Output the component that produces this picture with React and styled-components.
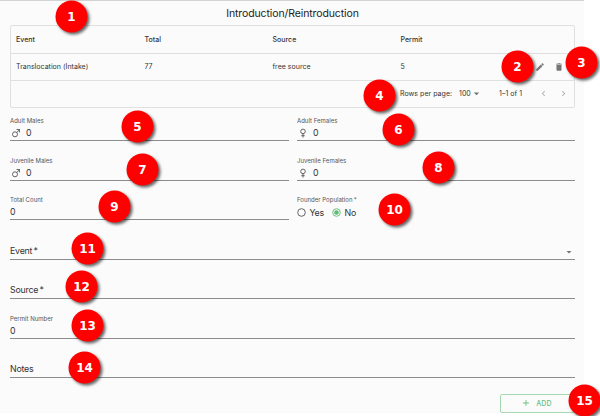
import React from "react";
import styled, { createGlobalStyle } from "styled-components";

const Global = createGlobalStyle`
  * { box-sizing: border-box; }
  body { margin: 0; background: #fff; overflow: hidden; }
`;

const Screen = styled.div`
  position: relative;
  width: 600px;
  height: 416px;
  overflow: hidden;
  background: #fff;
  font-family: Inter, "Liberation Sans", sans-serif;
  color: #333;
`;
const Panel = styled.main`
  width: 584px;
  height: 413px;
  padding: 0 9px 0 10px;
  border-top: 1px solid #d3d3d3;
  background: #fbfbfb;
`;
const Title = styled.h1`
  margin: 0;
  height: 24px;
  line-height: 26px;
  text-align: center;
  font-size: 10.5px;
  font-weight: 400;
  letter-spacing: -0.11px;
  color: #222;
`;
const Table = styled.section`
  height: 83px;
  border: 1px solid #e0e0e0;
  border-radius: 2px;
  font-size: 7px;
`;
const Row = styled.div`
  display: grid;
  grid-template-columns: 128.5px 128px 128px 1fr auto;
  align-items: center;
  height: ${(p) => (p.$head ? 28 : 27)}px;
  padding: 0 10px ${(p) => (p.$head ? 0 : 1)}px 5px;
  border-bottom: 1px solid #e0e0e0;
  font-weight: ${(p) => (p.$head ? 500 : 400)};
  letter-spacing: 0.02px;
  white-space: nowrap;
`;
const Actions = styled.div`
  display: flex;
  gap: 9px;
  padding-top: 1px;
  color: #757575;
`;
const Pager = styled.div`
  display: flex;
  align-items: center;
  justify-content: flex-end;
  height: 25px;
  padding-right: 5px;
  white-space: nowrap;
  letter-spacing: 0.04px;
`;
const PagerItem = styled.span`
  display: flex;
  align-items: center;
  width: ${(p) => p.$w}px;
  color: ${(p) => (p.$muted ? "#b0b0b0" : "#333")};
`;
const PagerArrow = styled.span`
  display: flex;
  margin-left: -0.5px;
  color: #757575;
`;
const Form = styled.form`
  display: grid;
  grid-template-columns: 279px 278px;
  column-gap: 8px;
  grid-template-rows: 33px 40px 39px 40px 39px 40px 39px;
`;
const Field = styled.label`
  display: flex;
  flex-direction: column;
  justify-content: flex-end;
  grid-column: ${(p) => (p.$wide ? "1 / -1" : "auto")};
  border-bottom: ${(p) => (p.$plain ? "0" : "1px solid #8c8c8c")};
`;
const Caption = styled.span`
  height: 8px;
  line-height: 8px;
  font-size: 6px;
  letter-spacing: 0.02px;
  color: #555;
  white-space: nowrap;
`;
const Value = styled.span`
  display: flex;
  align-items: center;
  height: 15px;
  line-height: 15px;
  padding-left: ${(p) => (p.$icon ? 2 : 0)}px;
  gap: 6px;
  font-size: 8.8px;
  letter-spacing: -0.2px;
  color: #333;
`;
const Prompt = styled(Value)`
  justify-content: space-between;
  height: 17px;
`;
const Star = styled.span`
  margin-left: 1.3px;
`;
const ArrowSlot = styled.span`
  display: flex;
  padding-top: 2px;
  color: #757575;
`;
const Radios = styled.span`
  display: flex;
  align-items: center;
  gap: 4px;
  height: 15px;
  margin-top: 1px;
  margin-left: -0.5px;
  font-size: 8.8px;
  letter-spacing: -0.2px;
`;
const RadioText = styled.span`
  width: ${(p) => p.$w}px;
`;
const Footer = styled.footer`
  display: flex;
  justify-content: flex-end;
  padding-top: 16px;
`;
const AddButton = styled.button`
  display: flex;
  align-items: center;
  justify-content: center;
  gap: 5px;
  width: 75px;
  height: 19px;
  padding: 0 2px 1px 0;
  border: 1px solid #a5d8b1;
  border-radius: 2px;
  background: transparent;
  font: 500 7px Inter, sans-serif;
  letter-spacing: 0.15px;
  color: #6bbf7f;
`;
const Badge = styled.span`
  position: absolute;
  left: ${(p) => p.$x - 16}px;
  top: ${(p) => p.$y - 16}px;
  transform: translate(0.5px, 0.5px);
  display: flex;
  align-items: center;
  justify-content: center;
  width: 32px;
  height: 32px;
  border-radius: 50%;
  background: #f00;
  box-shadow: 2px 2px 3px rgba(0, 0, 0, 0.6);
  font: bold 12px "DejaVu Sans", sans-serif;
  color: #fff;
`;

const Icon = ({ d, size = 10 }) => (
  <svg width={size} height={size} viewBox="0 0 24 24" fill="currentColor"><path d={d} /></svg>
);
const PENCIL = "M3 17.25V21h3.75L17.81 9.94l-3.75-3.75L3 17.25zM20.71 7.04a1 1 0 0 0 0-1.41l-2.34-2.34a1 1 0 0 0-1.41 0l-1.83 1.83 3.75 3.75 1.83-1.83z";
const TRASH = "M6 19c0 1.1.9 2 2 2h8c1.1 0 2-.9 2-2V7H6v12zM19 4h-3.5l-1-1h-5l-1 1H5v2h14V4z";
const LEFT = "M15.41 7.41 14 6l-6 6 6 6 1.41-1.41L10.83 12z";
const RIGHT = "M10 6 8.59 7.41 13.17 12l-4.58 4.59L10 18l6-6z";
const DOWN = "M7 10l5 5 5-5z";
const PLUS = "M19 13h-6v6h-2v-6H5v-2h6V5h2v6h6z";

const Sex = ({ male }) => (
  <svg width="8" height="10" viewBox="0 0 8 10" fill="none" stroke="#555" strokeWidth="0.9">
    {male ? (
      <><circle cx="3" cy="6.3" r="2.5" /><path d="M4.8 4.5 7.5 1.6M4.6 1.5h3v2.9" /></>
    ) : (
      <><circle cx="4" cy="3.4" r="2.3" /><path d="M4 5.7v3.8M2.3 7.7h3.4" /></>
    )}
  </svg>
);
const Radio = ({ on }) => (
  <svg width="9" height="9" viewBox="0 0 9 9" fill="none" stroke={on ? "#5dbb73" : "#555"}>
    <circle cx="4.5" cy="4.5" r="3.8" strokeWidth="0.9" />
    {on && <circle cx="4.5" cy="4.5" r="2.3" fill="#5dbb73" stroke="none" />}
  </svg>
);
const NumberField = ({ label, sex, wide }) => (
  <Field $wide={wide}>
    <Caption>{label}</Caption>
    <Value $icon={!!sex}>{sex && <Sex male={sex === "m"} />}0</Value>
  </Field>
);

const BADGES = [
  [71, 16], [517, 66], [581, 62], [379, 95], [137, 126],
  [398, 129], [142, 169], [438, 167], [114, 206], [394, 209],
  [87, 248], [81, 286], [87, 325], [84, 367], [584, 400],
];

export default function App() {
  return (
    <Screen>
      <Global />
      <Panel>
        <Title>Introduction/Reintroduction</Title>
        <Table>
          <Row $head>
            <span>Event</span><span>Total</span><span>Source</span><span>Permit</span>
          </Row>
          <Row>
            <span>Translocation (Intake)</span><span>77</span><span>free source</span><span>5</span>
            <Actions><Icon d={PENCIL} /><Icon d={TRASH} /></Actions>
          </Row>
          <Pager>
            <PagerItem $w={59}>Rows per page:</PagerItem>
            <PagerItem $w={40}>100<PagerArrow><Icon d={DOWN} size={13} /></PagerArrow></PagerItem>
            <PagerItem $w={39}>1–1 of 1</PagerItem>
            <PagerItem $w={20} $muted><Icon d={LEFT} size={11} /></PagerItem>
            <PagerItem $w={11} $muted><Icon d={RIGHT} size={11} /></PagerItem>
          </Pager>
        </Table>
        <Form>
          <NumberField label="Adult Males" sex="m" />
          <NumberField label="Adult Females" sex="f" />
          <NumberField label="Juvenile Males" sex="m" />
          <NumberField label="Juvenile Females" sex="f" />
          <NumberField label="Total Count" />
          <Field as="div" $plain>
            <Caption>Founder Population<Star>*</Star></Caption>
            <Radios>
              <Radio /><RadioText $w={18}>Yes</RadioText>
              <Radio on /><RadioText $w={14}>No</RadioText>
            </Radios>
          </Field>
          <Field $wide>
            <Prompt>
              <span>Event<Star>*</Star></span>
              <ArrowSlot><Icon d={DOWN} size={12} /></ArrowSlot>
            </Prompt>
          </Field>
          <Field $wide><Prompt><span>Source<Star>*</Star></span></Prompt></Field>
          <NumberField label="Permit Number" wide />
          <Field $wide><Prompt>Notes</Prompt></Field>
        </Form>
        <Footer>
          <AddButton><Icon d={PLUS} />ADD</AddButton>
        </Footer>
      </Panel>
      {BADGES.map(([x, y], i) => <Badge key={i} $x={x} $y={y}>{i + 1}</Badge>)}
    </Screen>
  );
}
